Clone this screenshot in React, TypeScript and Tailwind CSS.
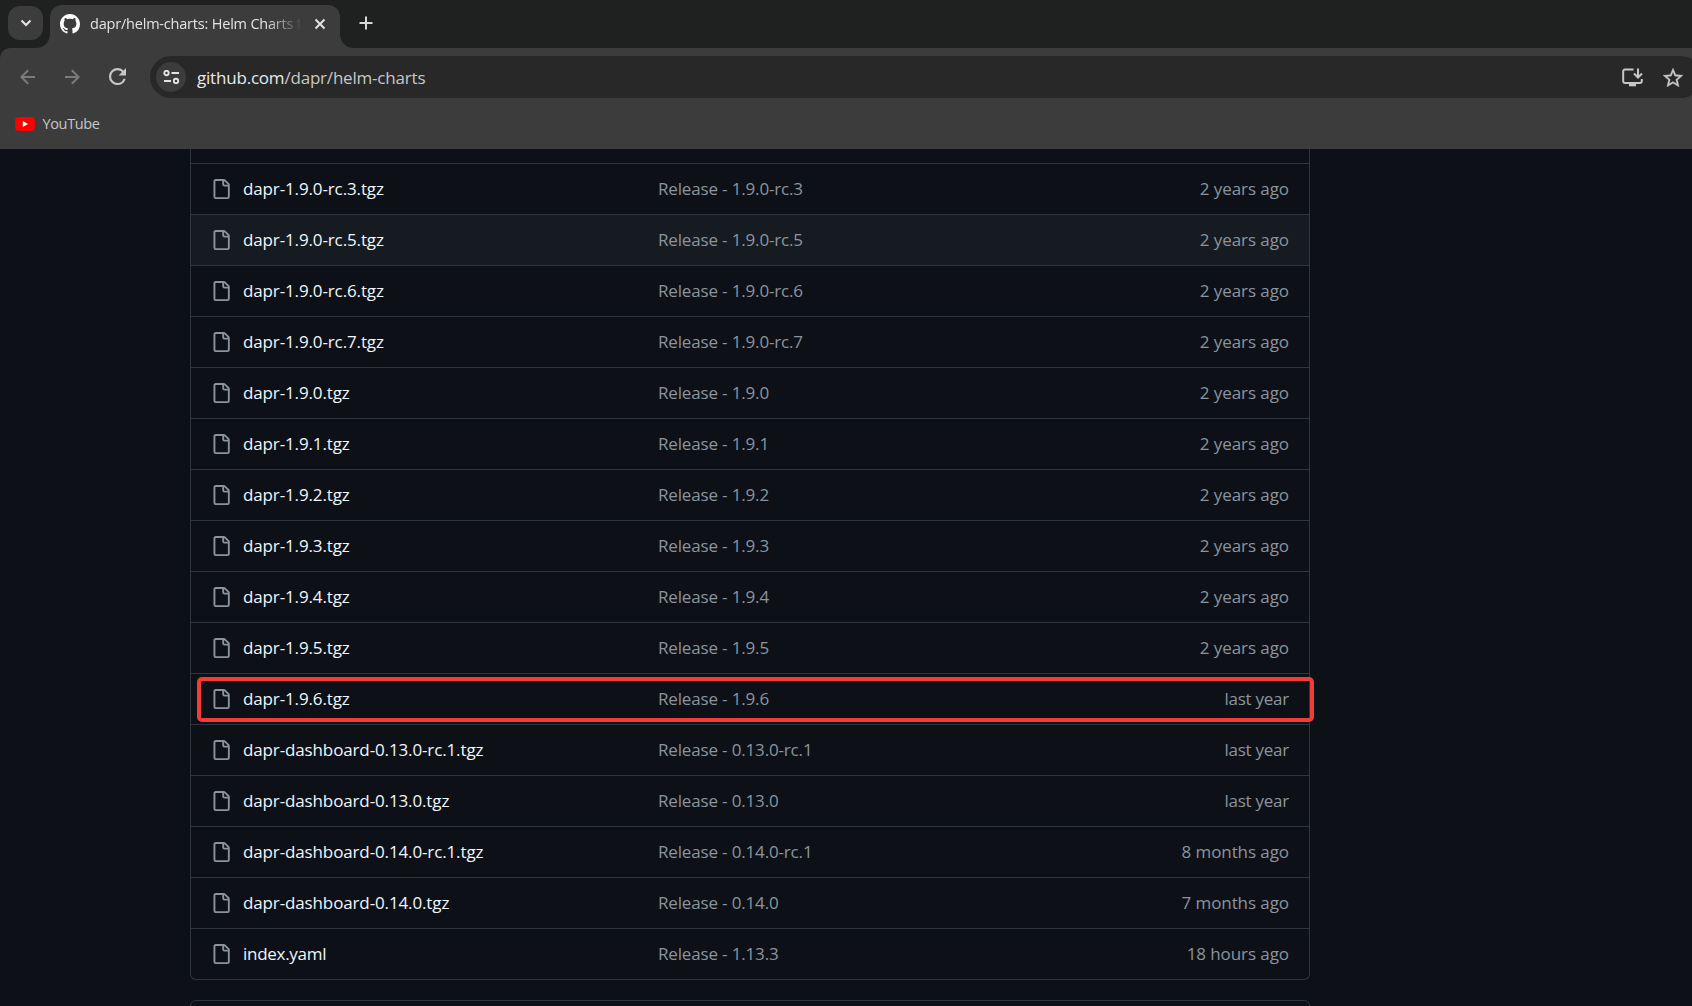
type FileRow = { name: string; message: string; age: string };

const files: FileRow[] = [
  { name: "dapr-1.9.0-rc.3.tgz", message: "Release - 1.9.0-rc.3", age: "2 years ago" },
  { name: "dapr-1.9.0-rc.5.tgz", message: "Release - 1.9.0-rc.5", age: "2 years ago" },
  { name: "dapr-1.9.0-rc.6.tgz", message: "Release - 1.9.0-rc.6", age: "2 years ago" },
  { name: "dapr-1.9.0-rc.7.tgz", message: "Release - 1.9.0-rc.7", age: "2 years ago" },
  { name: "dapr-1.9.0.tgz", message: "Release - 1.9.0", age: "2 years ago" },
  { name: "dapr-1.9.1.tgz", message: "Release - 1.9.1", age: "2 years ago" },
  { name: "dapr-1.9.2.tgz", message: "Release - 1.9.2", age: "2 years ago" },
  { name: "dapr-1.9.3.tgz", message: "Release - 1.9.3", age: "2 years ago" },
  { name: "dapr-1.9.4.tgz", message: "Release - 1.9.4", age: "2 years ago" },
  { name: "dapr-1.9.5.tgz", message: "Release - 1.9.5", age: "2 years ago" },
  { name: "dapr-1.9.6.tgz", message: "Release - 1.9.6", age: "last year" },
  { name: "dapr-dashboard-0.13.0-rc.1.tgz", message: "Release - 0.13.0-rc.1", age: "last year" },
  { name: "dapr-dashboard-0.13.0.tgz", message: "Release - 0.13.0", age: "last year" },
  { name: "dapr-dashboard-0.14.0-rc.1.tgz", message: "Release - 0.14.0-rc.1", age: "8 months ago" },
  { name: "dapr-dashboard-0.14.0.tgz", message: "Release - 0.14.0", age: "7 months ago" },
  { name: "index.yaml", message: "Release - 1.13.3", age: "18 hours ago" },
];

const hoveredFile = "dapr-1.9.0-rc.5.tgz";
const markedFile = "dapr-1.9.6.tgz";

function FileIcon() {
  return (
    <svg viewBox="0 0 16 16" className="size-5 shrink-0 fill-[#8b949e]">
      <path d="M2 1.75C2 .784 2.784 0 3.75 0h6.586c.464 0 .909.184 1.237.513l2.914 2.914c.329.328.513.773.513 1.237v9.586A1.75 1.75 0 0 1 13.25 16h-9.5A1.75 1.75 0 0 1 2 14.25Zm1.75-.25a.25.25 0 0 0-.25.25v12.5c0 .138.112.25.25.25h9.5a.25.25 0 0 0 .25-.25V6h-2.75A1.75 1.75 0 0 1 9 4.25V1.5Zm6.75.062V4.25c0 .138.112.25.25.25h2.688l-.011-.013-2.914-2.914-.013-.011Z" />
    </svg>
  );
}

function GitHubMark() {
  return (
    <svg viewBox="0 0 16 16" className="size-5 shrink-0 fill-white">
      <path d="M8 0c4.42 0 8 3.58 8 8a8.013 8.013 0 0 1-5.45 7.59c-.4.08-.55-.17-.55-.38 0-.27.01-1.13.01-2.2 0-.75-.25-1.23-.54-1.48 1.78-.2 3.65-.88 3.65-3.95 0-.88-.31-1.59-.82-2.15.08-.2.36-1.02-.08-2.12 0 0-.67-.22-2.2.82-.64-.18-1.32-.27-2-.27-.68 0-1.36.09-2 .27-1.53-1.03-2.2-.82-2.2-.82-.44 1.1-.16 1.92-.08 2.12-.51.56-.82 1.28-.82 2.15 0 3.06 1.86 3.75 3.64 3.95-.23.2-.44.55-.51 1.07-.46.21-1.61.55-2.33-.66-.15-.24-.6-.83-1.23-.82-.67.01-.27.38.01.53.34.19.73.9.82 1.13.16.45.68 1.31 2.69.94 0 .67.01 1.3.01 1.49 0 .21-.15.45-.55.38A7.995 7.995 0 0 1 0 8c0-4.42 3.58-8 8-8Z" />
    </svg>
  );
}

function TabStrip() {
  return (
    <div className="flex h-12 items-start bg-[#1f2120]">
      <button className="mt-1.5 ml-2 flex h-[34px] w-[35px] items-center justify-center rounded-xl bg-[#3c3c3c]">
        <svg viewBox="0 0 12 8" className="h-2 w-3 fill-none stroke-[#e6e6e6] stroke-2">
          <path d="M1.5 1.5 6 6l4.500-4.500" />
        </svg>
      </button>
      <div className="relative mt-[5px] ml-[7px] flex h-[43px] w-[290px] items-center rounded-t-xl bg-[#3c3c3c] pb-[5px] pl-[10px]">
        <svg viewBox="0 0 14 14" className="absolute bottom-0 -left-[14px] size-[14px] fill-[#3c3c3c]">
          <path d="M14 0v14H0C8 14 14 8 14 0Z" />
        </svg>
        <svg viewBox="0 0 14 14" className="absolute -right-[14px] bottom-0 size-[14px] fill-[#3c3c3c]">
          <path d="M0 0v14h14C6 14 0 8 0 0Z" />
        </svg>
        <GitHubMark />
        <span className="ml-[10px] w-[210px] text-[14.5px] tracking-[-0.2px] whitespace-nowrap text-[#e3e3e3] [mask-image:linear-gradient(to_right,black_175px,transparent_213px)]">
          dapr/helm-charts: Helm Charts f
        </span>
        <svg viewBox="0 0 12 12" className="ml-[14px] size-3 fill-none stroke-[#e3e3e3] stroke-2">
          <path d="m1.500 1.500 9 9m0-9-9 9" />
        </svg>
      </div>
      <svg viewBox="0 0 14 14" className="mt-4 ml-[18.5px] size-[14px] fill-none stroke-[#d8d8d8] stroke-2">
        <path d="M7 .5v13M.5 7h13" />
      </svg>
    </div>
  );
}

function AddressRow() {
  return (
    <div className="flex h-[58px] items-center">
      <svg viewBox="0 0 16 16" className="ml-5 size-4 fill-none stroke-[#7b7b7b] stroke-2">
        <path d="M15 8H1.700M8.200 1.200 1.400 8l6.800 6.800" />
      </svg>
      <svg viewBox="0 0 16 16" className="ml-7 size-4 fill-none stroke-[#7b7b7b] stroke-2">
        <path d="M1 8h13.300M7.800 1.200 14.600 8l-6.800 6.800" />
      </svg>
      <svg viewBox="4 4 16 16" className="mb-px ml-[29px] size-[17px] fill-[#c7c7c7]">
        <path d="M17.650 6.350A7.958 7.958 0 0 0 12 4a8 8 0 1 0 7.730 10h-2.080A5.990 5.990 0 0 1 12 18a6 6 0 1 1 0-12c1.660 0 3.140.69 4.220 1.780L13 11h7V4l-2.350 2.350Z" />
      </svg>
      <div className="-mr-[10px] ml-6 flex h-[42px] flex-1 items-center rounded-full bg-[#282828] pl-1.5">
        <div className="flex size-[30px] items-center justify-center rounded-full bg-[#3c3c3c]">
          <svg viewBox="0 0 17 14" className="h-[14px] w-[17px] fill-none stroke-[#e3e3e3] stroke-[1.9]">
            <circle cx="3.500" cy="3" r="2.200" />
            <path d="M8.500 3h7.500M1 11h7" />
            <circle cx="13" cy="11" r="2.200" />
          </svg>
        </div>
        <span className="mt-0.5 ml-[10px] flex-1 pl-px text-[17px] tracking-[-0.2px] text-[#c7c7c7]">
          <span className="text-[#e8eaed]">github.com</span>/dapr/helm-charts
        </span>
        <svg viewBox="0 0 21 19" className="h-[19px] w-[21px] fill-none stroke-[#c7c7c7] stroke-2">
          <path d="M11.500 1.500H3A1.800 1.800 0 0 0 1.200 3.300v9.900A1.800 1.800 0 0 0 3 15h15a1.800 1.800 0 0 0 1.800-1.800V11M16 .5v8.500M12 5.500l4 4 4-4" />
          <path d="M7 16.800h7" className="stroke-[3]" />
        </svg>
        <svg viewBox="2 2 20 19" className="mr-[19.5px] ml-[19.500px] h-[19px] w-5 fill-[#c7c7c7] stroke-[#c7c7c7] stroke-[0.3]">
          <path d="m22 9.240-7.190-.62L12 2 9.190 8.630 2 9.240l5.460 4.730L5.820 21 12 17.270 18.180 21l-1.630-7.030L22 9.240ZM12 15.400l-3.760 2.270 1-4.280-3.320-2.880 4.380-.38L12 6.100l1.710 4.040 4.380.38-3.320 2.880 1 4.280L12 15.400Z" />
        </svg>
      </div>
    </div>
  );
}

function BookmarkBar() {
  return (
    <div className="flex h-[43px] items-center pb-[7px] pl-[15px]">
      <svg viewBox="0 0 20 14" className="h-[14px] w-5">
        <path d="M3 .3C7 0 13 0 17 .3c1.700.1 2.600 1 2.700 2.700.3 3 .3 5 0 8-.1 1.700-1 2.600-2.700 2.700-4 .3-10 .3-14 0C1.300 13.600.4 12.700.3 11 0 8 0 6 .3 3 .4 1.300 1.300.4 3 .3Z" fill="#f00" />
        <path d="M7.800 4v6l5.200-3Z" fill="#fff" />
      </svg>
      <span className="ml-[7.500px] text-[14.5px] tracking-[-0.36px] text-[#c7c7c7]">YouTube</span>
    </div>
  );
}

function Row({ file }: { file: FileRow }) {
  return (
    <div
      className={`relative flex h-[51px] items-center border-t border-[#30363d] pr-5 pl-5 text-[17px] ${
        file.name === hoveredFile ? "bg-[#161b22]" : ""
      }`}
    >
      <FileIcon />
      <span
        className={`ml-3 w-[415px] text-[#f0f6fc] ${
          file.name === "index.yaml" ? "tracking-[-0.28px]" : "tracking-[-0.13px]"
        }`}
      >
        {file.name}
      </span>
      <span className="flex-1 tracking-[-0.16px] text-[#8b949e]">{file.message}</span>
      <span
        className={`text-[#8b949e] ${file.age === "last year" ? "tracking-[-0.25px]" : "tracking-[-0.08px]"}`}
      >
        {file.age}
      </span>
      {file.name === markedFile && (
        <div className="absolute top-[3px] -right-[5px] left-1.5 h-[45px] rounded-[5px] border-4 border-[#f43b38]" />
      )}
    </div>
  );
}

export default function App() {
  return (
    <div className="flex h-[1006px] w-full flex-col overflow-hidden bg-[#0d1117] font-['Open_Sans',sans-serif]">
      <header className="shrink-0 bg-[#1f2120]">
        <TabStrip />
        <div className="h-[101px] rounded-tl-[10px] bg-[#3c3c3c]">
          <AddressRow />
          <BookmarkBar />
        </div>
      </header>
      <main className="ml-[190px] w-[1120px]">
        <section className="rounded-b-md border border-t-0 border-[#30363d] pt-[14px]">
          {files.map((file) => (
            <Row key={file.name} file={file} />
          ))}
        </section>
        <section className="mt-5 h-10 rounded-t-md border border-[#30363d]" />
      </main>
    </div>
  );
}
